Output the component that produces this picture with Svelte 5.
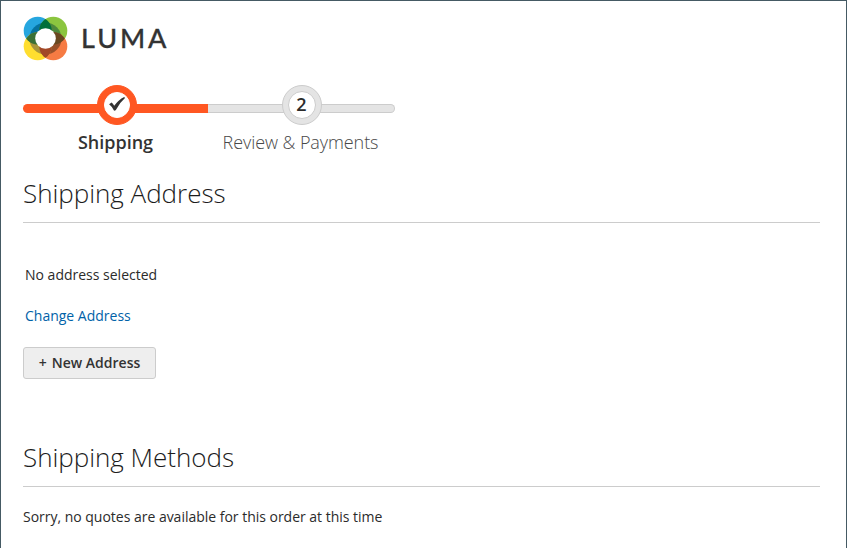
<script>
  const petals = [
    { id: 'blue', cx: 14.7, cy: 14.7, fill: '#26a6df', core: '#06729f' },
    { id: 'green', cx: 30.3, cy: 14.7, fill: '#8bc53f', core: '#4d883c' },
    { id: 'orange', cx: 30.3, cy: 30.3, fill: '#f67b43', core: '#985029' },
    { id: 'yellow', cx: 14.7, cy: 30.3, fill: '#ffde2f', core: '#a9963b' }
  ];
  const overlaps = [
    { a: 'blue', cx: 30.3, cy: 14.7, fill: '#006f3b' },
    { a: 'green', cx: 30.3, cy: 30.3, fill: '#694820' },
    { a: 'orange', cx: 14.7, cy: 30.3, fill: '#a24827' },
    { a: 'yellow', cx: 14.7, cy: 14.7, fill: '#3a7036' }
  ];
</script>

<main>
  <header>
    <svg class="mark" width="45" height="45" viewBox="0 0 45 45" aria-hidden="true">
      <defs>
        {#each petals as p}
          <clipPath id={p.id}><circle cx={p.cx} cy={p.cy} r="14" /></clipPath>
        {/each}
      </defs>
      {#each petals as p}
        <circle cx={p.cx} cy={p.cy} r="14" fill={p.fill} />
      {/each}
      {#each petals as p}
        <circle cx="22.5" cy="22.5" r="16" fill={p.core} clip-path="url(#{p.id})" />
      {/each}
      {#each overlaps as o}
        <circle cx={o.cx} cy={o.cy} r="14" fill={o.fill} clip-path="url(#{o.a})" />
      {/each}
      <circle cx="22.5" cy="22.5" r="10.3" fill="#fff" />
    </svg>
    <span class="brand">LUMA</span>
  </header>

  <ol class="progress">
    <li class="step active">
      <div class="track"></div>
      <div class="dot"><div class="inner">
        <svg width="18" height="16" viewBox="0 0 18 16" aria-hidden="true">
          <path d="M1.1 8.3 L3.6 6.5 Q5.2 7.7 6.2 9.8 Q10.5 3.7 16.2 0.9 L17 2 Q11.5 6.7 7.7 14.2 L6.1 14.7 Q4.1 10.6 1.1 8.3Z" fill="#333" />
        </svg>
      </div></div>
      <span class="label">Shipping</span>
    </li>
    <li class="step">
      <div class="track"></div>
      <div class="dot"><div class="inner">2</div></div>
      <span class="label">Review &amp; Payments</span>
    </li>
  </ol>

  <section class="address">
    <h2>Shipping Address</h2>
    <p>No address selected</p>
    <a href="#change">Change Address</a>
    <button type="button"><span class="plus">+</span>New Address</button>
  </section>

  <section class="methods">
    <h2>Shipping Methods</h2>
    <p>Sorry, no quotes are available for this order at this time</p>
  </section>
</main>

<style>
  :global(body) { margin: 0; background: #fff; }
  main {
    box-sizing: border-box;
    height: 548px;
    padding: 0 26px 0 22px;
    border: 1px solid #455a64;
    border-bottom: 0;
    overflow: hidden;
    color: #2b2b2b;
    font: 14px/20px "Open Sans", sans-serif;
  }
  header { display: flex; height: 84px; }
  .mark { margin-top: 15px; flex: none; }
  .brand {
    margin: 21px 0 0 13px;
    color: #333;
    font: 500 27px/32px Lato, sans-serif;
    letter-spacing: 2.9px;
    -webkit-text-stroke: 0.3px #333;
  }
  .progress { display: flex; margin: 0; padding: 0; list-style: none; width: 372px; height: 92px; }
  .step { position: relative; flex: none; width: 185px; text-align: center; }
  .step:last-child { width: 187px; }
  .track {
    box-sizing: border-box;
    height: 9px;
    margin-top: 19px;
    background: #e4e4e4;
    border: 1px solid #ccc;
    border-left: 0;
    border-radius: 0 5px 5px 0;
  }
  .dot {
    position: absolute;
    top: 0;
    left: 74px;
    box-sizing: border-box;
    width: 40px;
    height: 40px;
    padding: 5px;
    border: 1px solid #ccc;
    border-radius: 50%;
    background: #e4e4e4;
  }
  .inner {
    box-sizing: border-box;
    height: 28px;
    padding-right: 1px;
    border: 1px solid #ccc;
    border-radius: 50%;
    background: #fff;
    font-size: 18px;
    font-weight: 600;
    line-height: 25px;
  }
  .active .track { background: #ff5722; border: 0; border-radius: 5px 0 0 5px; }
  .active .dot { background: #ff5722; border-color: #ff5722; }
  .active .inner { border-color: #fff; width: 26px; height: 26px; margin: 1px; }
  .active svg { display: block; margin: 3px auto 0 3px; }
  .label {
    display: block;
    margin-top: 17px;
    color: #484848;
    font-size: 18px;
    font-weight: 300;
    line-height: 25px;
    letter-spacing: -0.08px;
  }
  .step:last-child .label { padding-right: 2px; }
  .active .label { font-weight: 600; color: #333; letter-spacing: 0; }
  h2 {
    margin: 0;
    height: 45px;
    border-bottom: 1px solid #ccc;
    color: #1c1c1c;
    font-size: 26px;
    font-weight: 300;
    line-height: 32px;
    letter-spacing: -0.03px;
  }
  .address { height: 264px; }
  .address p { margin: 42px 0 0 2px; }
  .address a { display: block; margin: 21px 0 0 2px; color: #0062a8; text-decoration: none; }
  button {
    display: block;
    box-sizing: border-box;
    width: 133px;
    height: 32px;
    margin-top: 21px;
    padding: 0;
    border: 1px solid #ccc;
    border-radius: 3px;
    background: #eee;
    color: #333;
    font: 600 14px/16px "Open Sans", sans-serif;
  }
  .plus { margin-right: 5px; }
  .methods p { margin: 20px 0 0; letter-spacing: -0.015px; }
</style>
